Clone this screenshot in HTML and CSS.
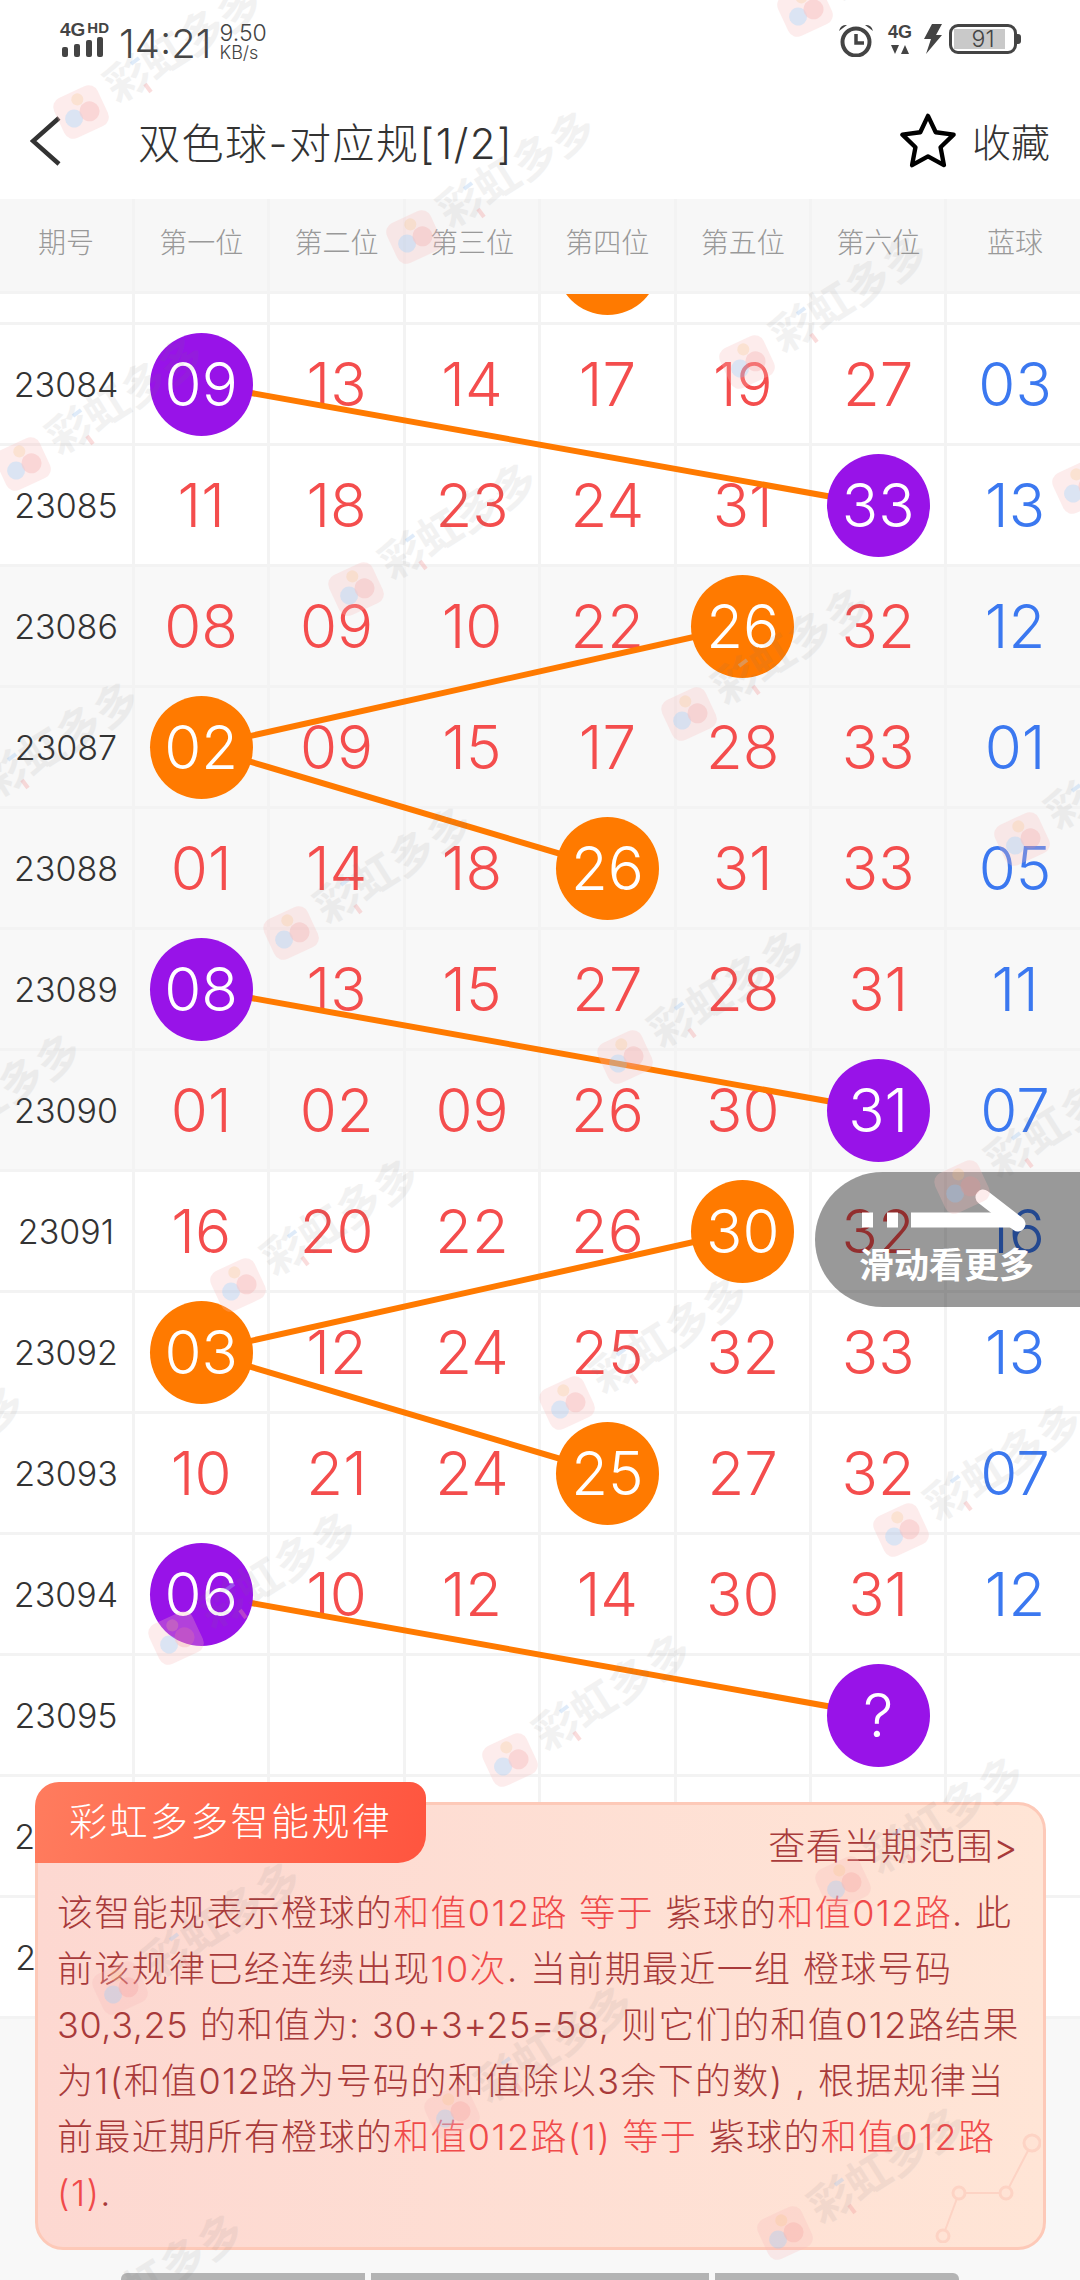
FILE: index.html
```html
<!DOCTYPE html>
<html lang="zh-CN">
<head>
  <meta charset="UTF-8">
  <title>双色球-对应规</title>
  <link rel="stylesheet" href="styles.css">
</head>
<body>
<div class="page">

  <div class="status">
    <div class="signal">
      <div class="net"><span class="net-4g">4G</span><span class="net-hd">HD</span></div>
      <svg class="bars" width="42" height="20" viewBox="0 0 42 20">
        <rect x="0" y="10" width="6" height="10" rx="2"/>
        <rect x="12" y="7" width="6" height="13" rx="2"/>
        <rect x="24" y="3" width="6" height="17" rx="2"/>
        <rect x="35" y="0" width="6" height="20" rx="2"/>
      </svg>
    </div>
    <div class="time">14:21</div>
    <div class="speed"><span class="speed-num">9.50</span><span class="speed-unit">KB/s</span></div>
    <div class="status-right">
      <svg class="alarm" width="36" height="34" viewBox="0 0 36 34">
        <circle cx="18" cy="19" r="13.5" fill="none" stroke="#444" stroke-width="4"/>
        <path d="M18 11v9h8" fill="none" stroke="#444" stroke-width="3.5"/>
        <path d="M1 8a7 7 0 0 1 8-6zM35 8a7 7 0 0 0-8-6z" fill="#444"/>
      </svg>
      <div class="net-right">
        <span class="net-4g">4G</span>
        <svg width="18" height="9" viewBox="0 0 18 9"><path d="M0 0h8l-4 9zM14 0l4 9h-8z" fill="#444"/></svg>
      </div>
      <svg class="bolt" width="20" height="30" viewBox="0 0 20 30"><path d="M9 0h10l-6 11h6L3 30l5-15H1z" fill="#444"/></svg>
      <div class="battery"><div class="battery-fill"></div><span class="battery-num">91</span></div>
    </div>
  </div>

  <div class="titlebar">
    <svg class="back" width="32" height="52" viewBox="0 0 32 52"><path d="M29 3L3 26l26 23" fill="none" stroke="#333" stroke-width="4.5"/></svg>
    <h1 class="title">双色球-对应规[1/2]</h1>
    <div class="fav">
      <svg width="58" height="56" viewBox="0 0 60 58"><path d="M30 4l8 17 18.500 2.500-13.500 13 3.500 18.500-16.500-9-16.500 9 3.500-18.500-13.500-13 18.500-2.500z" fill="none" stroke="#000" stroke-width="4.500" stroke-linejoin="round"/></svg>
      <span>收藏</span>
    </div>
  </div>

  <div class="head-row">
    <div class="cell">期号</div><div class="cell">第一位</div><div class="cell">第二位</div><div class="cell">第三位</div><div class="cell">第四位</div><div class="cell">第五位</div><div class="cell">第六位</div><div class="cell">蓝球</div>
  </div>

  <div class="rows">
    <svg class="links" width="1080" height="1986" viewBox="0 294 1080 1986">
      <line x1="201" y1="384" x2="877" y2="505"/>
      <line x1="201" y1="747" x2="743" y2="626"/>
      <line x1="201" y1="747" x2="608" y2="868"/>
      <line x1="201" y1="989" x2="877" y2="1110"/>
      <line x1="201" y1="1352" x2="743" y2="1231"/>
      <line x1="201" y1="1352" x2="608" y2="1473"/>
      <line x1="201" y1="1594" x2="877" y2="1715"/>
    </svg>

    <div class="row row-first">
      <div class="cell"></div><div class="cell"></div><div class="cell"></div><div class="cell"></div><div class="cell"><span class="ball orange"></span></div><div class="cell"></div><div class="cell"></div><div class="cell"></div>
    </div>
    <div class="row">
      <div class="cell">23084</div><div class="cell"><span class="ball purple">09</span></div><div class="cell">13</div><div class="cell">14</div><div class="cell">17</div><div class="cell">19</div><div class="cell">27</div><div class="cell">03</div>
    </div>
    <div class="row">
      <div class="cell">23085</div><div class="cell">11</div><div class="cell">18</div><div class="cell">23</div><div class="cell">24</div><div class="cell">31</div><div class="cell"><span class="ball purple">33</span></div><div class="cell">13</div>
    </div>
    <div class="row grey">
      <div class="cell">23086</div><div class="cell">08</div><div class="cell">09</div><div class="cell">10</div><div class="cell">22</div><div class="cell"><span class="ball orange">26</span></div><div class="cell">32</div><div class="cell">12</div>
    </div>
    <div class="row grey">
      <div class="cell">23087</div><div class="cell"><span class="ball orange">02</span></div><div class="cell">09</div><div class="cell">15</div><div class="cell">17</div><div class="cell">28</div><div class="cell">33</div><div class="cell">01</div>
    </div>
    <div class="row grey">
      <div class="cell">23088</div><div class="cell">01</div><div class="cell">14</div><div class="cell">18</div><div class="cell"><span class="ball orange">26</span></div><div class="cell">31</div><div class="cell">33</div><div class="cell">05</div>
    </div>
    <div class="row grey">
      <div class="cell">23089</div><div class="cell"><span class="ball purple">08</span></div><div class="cell">13</div><div class="cell">15</div><div class="cell">27</div><div class="cell">28</div><div class="cell">31</div><div class="cell">11</div>
    </div>
    <div class="row grey">
      <div class="cell">23090</div><div class="cell">01</div><div class="cell">02</div><div class="cell">09</div><div class="cell">26</div><div class="cell">30</div><div class="cell"><span class="ball purple">31</span></div><div class="cell">07</div>
    </div>
    <div class="row">
      <div class="cell">23091</div><div class="cell">16</div><div class="cell">20</div><div class="cell">22</div><div class="cell">26</div><div class="cell"><span class="ball orange">30</span></div><div class="cell">32</div><div class="cell">16</div>
    </div>
    <div class="row">
      <div class="cell">23092</div><div class="cell"><span class="ball orange">03</span></div><div class="cell">12</div><div class="cell">24</div><div class="cell">25</div><div class="cell">32</div><div class="cell">33</div><div class="cell">13</div>
    </div>
    <div class="row">
      <div class="cell">23093</div><div class="cell">10</div><div class="cell">21</div><div class="cell">24</div><div class="cell"><span class="ball orange">25</span></div><div class="cell">27</div><div class="cell">32</div><div class="cell">07</div>
    </div>
    <div class="row">
      <div class="cell">23094</div><div class="cell"><span class="ball purple">06</span></div><div class="cell">10</div><div class="cell">12</div><div class="cell">14</div><div class="cell">30</div><div class="cell">31</div><div class="cell">12</div>
    </div>
    <div class="row">
      <div class="cell">23095</div><div class="cell"></div><div class="cell"></div><div class="cell"></div><div class="cell"></div><div class="cell"></div><div class="cell"><span class="ball purple">?</span></div><div class="cell"></div>
    </div>
    <div class="row">
      <div class="cell">23096</div><div class="cell"></div><div class="cell"></div><div class="cell"></div><div class="cell"></div><div class="cell"></div><div class="cell"></div><div class="cell"></div>
    </div>
    <div class="row">
      <div class="cell">23097</div><div class="cell"></div><div class="cell"></div><div class="cell"></div><div class="cell"></div><div class="cell"></div><div class="cell"></div><div class="cell"></div>
    </div>

    <div class="foot">
      <div class="foot-tab foot-left"></div>
      <div class="foot-tab foot-mid"></div>
      <div class="foot-tab foot-right"></div>
    </div>
  </div>

  <!-- 滑动提示 -->
  <div class="swipe">
    <svg width="170" height="50" viewBox="0 0 170 50">
      <path d="M0 28h11M25 28h11M49 28h100" stroke="#fff" stroke-width="15" fill="none"/>
      <path d="M121 5l35 27" stroke="#fff" stroke-width="15" stroke-linecap="round" fill="none"/>
    </svg>
    <span>滑动看更多</span>
  </div>

  <!-- 规律说明 -->
  <div class="rule">
    <div class="rule-tab">彩虹多多智能规律</div>
    <div class="rule-link">查看当期范围&gt;</div>
    <p class="rule-text">该智能规表示橙球的<em>和值012路 等于</em> 紫球的<em>和值012路</em>. 此<br>前该规律已经连续出现<em>10次</em>. 当前期最近一组 橙球号码<br><span class="nums">30,3,25</span> 的和值为: <span class="nums">30+3+25=58,</span> 则它们的和值012路结果<br>为1(和值012路为号码的和值除以3余下的数) , 根据规律当<br>前最近期所有橙球的<em>和值012路(1) 等于</em> 紫球的<em>和值012路<br>(1)</em>.</p>
    <svg class="rule-deco" width="110" height="110" viewBox="0 0 110 110">
      <path d="M12 103L28 60h47l26-50" fill="none" stroke="#fdd3c4" stroke-width="2"/>
      <circle cx="101" cy="10" r="8" fill="#ffe3d5" stroke="#fdd3c4" stroke-width="3"/>
      <circle cx="75" cy="60" r="6" fill="#ffe3d5" stroke="#fdd3c4" stroke-width="3"/>
      <circle cx="28" cy="60" r="6" fill="#ffe3d5" stroke="#fdd3c4" stroke-width="3"/>
      <circle cx="12" cy="103" r="6" fill="#ffe3d5" stroke="#fdd3c4" stroke-width="3"/>
    </svg>
  </div>

  <!-- 水印 -->
  <svg class="watermarks" width="1080" height="2280" viewBox="0 0 1080 2280">
    <defs>
      <g id="wm">
        <g transform="rotate(-25)" opacity=".55">
          <rect x="-24" y="-22" width="48" height="44" rx="10" fill="#f9bcbc" opacity=".5"/>
          <circle cx="-9" cy="3" r="9" fill="#a5c8f0" opacity=".7"/>
          <circle cx="8" cy="3" r="10" fill="#f39d9d" opacity=".6"/>
          <circle cx="2" cy="-13" r="6" fill="#f7c08f" opacity=".6"/>
        </g>
        <text class="wm-text" transform="translate(36 -8) rotate(-32)">彩虹多多</text>
        <path d="M50 -48l8 -6" stroke="#a5c8f0" stroke-width="4" opacity=".35"/>
        <path d="M64 -28l6 8" stroke="#f39d9d" stroke-width="4" opacity=".35"/>
      </g>
    </defs>
    <use href="#wm" x="805" y="10"/>
    <use href="#wm" x="81" y="112"/>
    <use href="#wm" x="414" y="237"/>
    <use href="#wm" x="747" y="362"/>
    <use href="#wm" x="1080" y="487"/>
    <use href="#wm" x="23" y="464"/>
    <use href="#wm" x="356" y="589"/>
    <use href="#wm" x="689" y="714"/>
    <use href="#wm" x="1022" y="839"/>
    <use href="#wm" x="-42" y="808"/>
    <use href="#wm" x="291" y="933"/>
    <use href="#wm" x="625" y="1057"/>
    <use href="#wm" x="962" y="1187"/>
    <use href="#wm" x="-100" y="1160"/>
    <use href="#wm" x="238" y="1285"/>
    <use href="#wm" x="567" y="1403"/>
    <use href="#wm" x="901" y="1530"/>
    <use href="#wm" x="-157" y="1512"/>
    <use href="#wm" x="176" y="1638"/>
    <use href="#wm" x="510" y="1760"/>
    <use href="#wm" x="843" y="1883"/>
    <use href="#wm" x="120" y="1988"/>
    <use href="#wm" x="452" y="2112"/>
    <use href="#wm" x="785" y="2233"/>
    <use href="#wm" x="62" y="2340"/>
  </svg>
</div>
</body>
</html>
```

FILE: styles.css
```css
* {
  box-sizing: border-box;
}
body {
  margin: 0;
  background: #fff;
  font-family: Inter, "Noto Sans CJK SC", sans-serif;
  color: #333;
}
.page {
  position: relative;
  width: 1080px;
  height: 2280px;
  overflow: hidden;
  display: flex;
  flex-direction: column;
}

/* status bar */
.status {
  height: 93px;
  flex: none;
  display: flex;
  align-items: flex-start;
  padding: 22px 63px 0 60px;
  color: #444;
}
.signal {
  width: 46px;
}
.net {
  display: flex;
  gap: 2px;
  height: 15px;
  line-height: 15px;
}
.net-4g {
  font: bold 19px/15px "Liberation Sans", sans-serif;
}
.net-hd {
  font: bold 15px/11px "Liberation Sans", sans-serif;
}
.bars {
  display: block;
  fill: #444;
  margin: 0 0 0 2px;
}
.time {
  margin-left: 13px;
  font-size: 40px;
  font-weight: 300;
  line-height: 44px;
}
.speed {
  margin-left: 8px;
  display: flex;
  flex-direction: column;
  font-weight: 300;
}
.speed-num {
  font-size: 23px;
  line-height: 22px;
}
.speed-unit {
  font-size: 18px;
  line-height: 18px;
}
.status-right {
  margin-left: auto;
  display: flex;
  align-items: flex-start;
  margin-top: 1px;
}
.alarm {
  margin-right: 13px;
}
.net-right {
  width: 26px;
  margin-top: 2px;
  display: flex;
  flex-direction: column;
  align-items: center;
  gap: 5px;
}
.net-right .net-4g {
  font-size: 18px;
}
.bolt {
  margin: 1px 6px 0 10px;
}
.battery {
  position: relative;
  width: 68px;
  height: 30px;
  margin-top: 1px;
  border: 3px solid #444;
  border-radius: 9px;
  display: flex;
  align-items: center;
  justify-content: center;
}
.battery::after {
  content: "";
  position: absolute;
  right: -7px;
  top: 7px;
  width: 4px;
  height: 10px;
  background: #444;
  border-radius: 0 3px 3px 0;
}
.battery-fill {
  position: absolute;
  left: 2px;
  top: 2px;
  bottom: 2px;
  width: 51px;
  background: #c9c9c9;
}
.battery-num {
  position: relative;
  font-size: 23px;
  font-weight: 300;
  line-height: 24px;
}

/* title */
.titlebar {
  height: 106px;
  flex: none;
  display: flex;
  align-items: center;
  padding: 0 30px;
}
.back {
  margin-top: -10px;
}
.title {
  margin: -12px 0 0 76px;
  font-size: 42px;
  font-weight: 300;
  letter-spacing: 1.5px;
  color: #333;
}
.fav {
  margin: -12px 0 0 auto;
  display: flex;
  align-items: center;
  gap: 15px;
  font-size: 39px;
  font-weight: 300;
}
.fav svg {
  display: block;
}

/* table */
.head-row,
.row {
  display: grid;
  grid-template-columns: 135px repeat(7, 135.4px);
  border-bottom: 3px solid #f3f3f3;
}
.cell {
  display: flex;
  align-items: center;
  justify-content: center;
  border-right: 3px solid #f3f3f3;
}
.cell:last-child {
  border-right: 0;
}
.head-row {
  height: 95px;
  flex: none;
  background: #f7f7f7;
  font-size: 28px;
  font-weight: 300;
  line-height: 28px;
  color: #999;
  position: relative;
  z-index: 2;
}
.head-row .cell {
  padding-bottom: 5px;
}
.rows {
  position: relative;
  flex: 1;
  overflow: hidden;
  display: flex;
  flex-direction: column;
  background: #f8f8f8;
}
.links {
  position: absolute;
  left: 0;
  top: 0;
  z-index: 1;
}
.links line {
  stroke: #ff7a00;
  stroke-width: 6;
}
.row {
  flex: none;
  height: 121px;
  background: #fff;
  font-size: 60px;
  font-weight: 300;
  color: #f44d4d;
}
.row-first {
  margin-top: -90px;
}
.row.grey {
  background: #f8f8f8;
}
.row .cell:first-child {
  font-size: 34px;
  color: #333;
}
.row .cell:last-child {
  color: #3b78f0;
}
.ball {
  position: relative;
  z-index: 2;
  width: 103px;
  height: 103px;
  border-radius: 50%;
  display: flex;
  align-items: center;
  justify-content: center;
  color: #fff;
}
.orange {
  background: #ff7a00;
}
.purple {
  background: #9813e8;
}
.foot {
  flex: 1;
  display: flex;
  align-items: flex-end;
  gap: 6px;
  padding-left: 121px;
}
.foot-tab {
  height: 7px;
  background: #b4b4b4;
}
.foot-left {
  width: 244px;
  border-radius: 6px 0 0 0;
}
.foot-mid {
  width: 338px;
}
.foot-right {
  width: 244px;
  border-radius: 0 6px 0 0;
}

/* overlays */
.swipe {
  position: absolute;
  left: 815px;
  top: 1172px;
  width: 265px;
  height: 135px;
  padding: 20px 0 0 47px;
  background: rgba(0, 0, 0, 0.4);
  border-radius: 68px 0 0 68px;
  z-index: 3;
  color: #fff;
}
.swipe svg {
  display: block;
  overflow: visible;
}
.swipe span {
  display: block;
  margin: 3px 0 0 -3px;
  font-size: 35px;
  line-height: 40px;
  font-weight: 700;
}

.rule {
  position: absolute;
  left: 35px;
  top: 1802px;
  width: 1011px;
  height: 448px;
  padding: 0 20px 0 19px;
  background: linear-gradient(90deg, #fdd8d1, #ffe5d6);
  border: 3px solid #fdc9b8;
  border-radius: 28px;
  z-index: 4;
  color: #a83a3a;
}
.rule-tab {
  position: absolute;
  left: -3px;
  top: -23px;
  width: 391px;
  height: 81px;
  padding-left: 34px;
  background: linear-gradient(100deg, #ff7c5e, #ff553f);
  border-radius: 24px 16px 28px 0;
  color: #fff;
  font-size: 38px;
  font-weight: 300;
  letter-spacing: 2.4px;
  line-height: 78px;
}
.rule-link {
  position: absolute;
  right: 25px;
  top: 17px;
  font-size: 37px;
  font-weight: 300;
  letter-spacing: 0.5px;
  line-height: 50px;
}
.rule-text {
  margin: 80px 0 0;
  font-size: 36px;
  font-weight: 300;
  letter-spacing: 1.35px;
  line-height: 56px;
  white-space: nowrap;
}
.rule-text em {
  font-style: normal;
  color: #f04a4a;
}
.rule-text .nums {
  letter-spacing: 0.6px;
}
.rule-deco {
  position: absolute;
  right: 2px;
  bottom: 4px;
}

.watermarks {
  position: absolute;
  left: 0;
  top: 0;
  z-index: 5;
  pointer-events: none;
}
.wm-text {
  font-family: "Noto Sans CJK SC", sans-serif;
  font-size: 44px;
  font-weight: 700;
  fill: #777;
  opacity: 0.09;
}
```
